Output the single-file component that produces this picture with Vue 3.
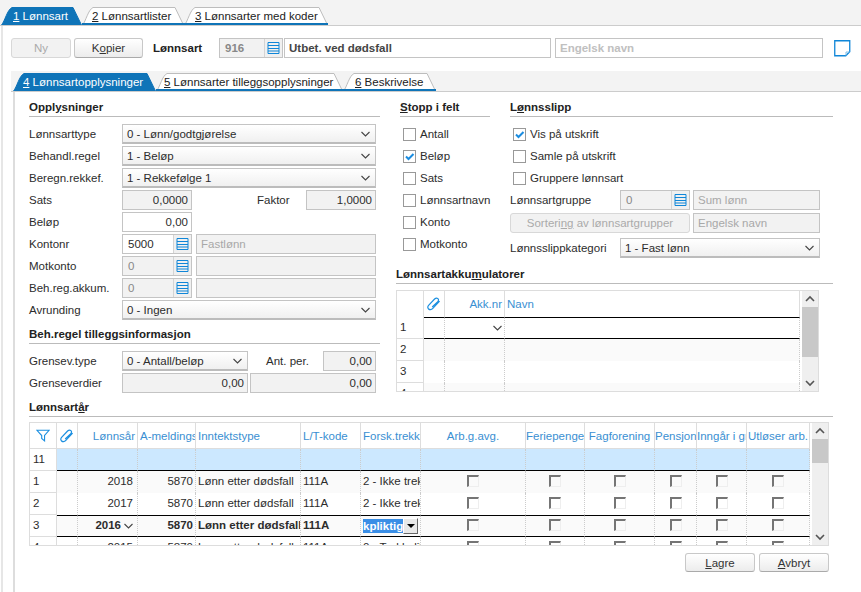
<template>
  <div class="page">
    <nav class="tabs top-tabs">
      <div
        v-for="tab in mainTabs"
        :key="tab.key"
        class="tab"
        :class="{ active: tab.active }"
        :style="{ width: tab.w + 'px' }"
      >
        <svg class="tab-shape" :width="tab.w" height="18">
          <path :d="tabPath(tab.w)" />
          <rect v-if="!tab.active" x="0" y="16" :width="tab.w" height="2" fill="#0f74b8" stroke="none" />
        </svg>
        <span class="tab-label" :style="{ paddingLeft: tab.pad + 'px' }"><u>{{ tab.key }}</u> {{ tab.label }}</span>
      </div>
    </nav>

    <div class="shell">
      <header class="toolbar">
        <button class="btn disabled ny">Ny</button>
        <button class="btn kopier">K<u>o</u>pier</button>
        <span class="toolbar-label">Lønnsart</span>
        <div class="field lookup number disabled-bg">
          <span class="lookup-value">916</span>
          <span class="lookup-btn">
            <svg width="13" height="12" viewBox="0 0 13 12"><path d="M1 .5h11v11H1zM1 3.5h11M1 6.5h11M1 9h11" class="list-icon" /></svg>
          </span>
        </div>
        <div class="field name-field">Utbet. ved dødsfall</div>
        <div class="field english-field">Engelsk navn</div>
        <svg class="note" width="17" height="17" viewBox="0 0 17 17">
          <path d="M.75.75h15v11l-4 4h-11z" fill="none" stroke="#0f86d8" stroke-width="1.3" />
          <path d="M12 15.5v-3.5h3.5" fill="none" stroke="#7fbfe9" />
        </svg>
      </header>

      <nav class="tabs sub-tabs">
        <div
          v-for="tab in subTabs"
          :key="tab.key"
          class="tab"
          :class="{ active: tab.active }"
          :style="{ width: tab.w + 'px' }"
        >
          <svg class="tab-shape" :width="tab.w" height="18">
            <path :d="tabPath(tab.w)" />
            <rect v-if="!tab.active" x="0" y="16" :width="tab.w" height="2" fill="#0f74b8" stroke="none" />
          </svg>
          <span class="tab-label" :style="{ paddingLeft: tab.pad + 'px' }"><u>{{ tab.key }}</u> {{ tab.label }}</span>
        </div>
      </nav>

      <main class="panel">
        <div class="upper">
          <section class="col-left">
            <h4 class="heading">Oppl<u>y</u>sninger</h4>
            <div class="form">
              <div class="row">
                <label>Lønnsarttype</label>
                <div class="select wide">0 - Lønn/godtgjørelse<svg class="chev" width="9" height="6" viewBox="0 0 9 6"><path d="M.5 1l4 4 4-4" /></svg></div>
              </div>
              <div class="row">
                <label>Behandl.regel</label>
                <div class="select wide">1 - Beløp<svg class="chev" width="9" height="6" viewBox="0 0 9 6"><path d="M.5 1l4 4 4-4" /></svg></div>
              </div>
              <div class="row">
                <label>Beregn.rekkef.</label>
                <div class="select wide">1 - Rekkefølge 1<svg class="chev" width="9" height="6" viewBox="0 0 9 6"><path d="M.5 1l4 4 4-4" /></svg></div>
              </div>
              <div class="row">
                <label>Sats</label>
                <div class="field num disabled-bg w70">0,0000</div>
                <span class="inline-label faktor">Faktor</span>
                <div class="field num disabled-bg w70">1,0000</div>
              </div>
              <div class="row">
                <label>Beløp</label>
                <div class="field num w70">0,00</div>
              </div>
              <div class="row" v-for="item in lookups" :key="item.label">
                <label>{{ item.label }}</label>
                <div class="field lookup w70" :class="{ 'disabled-bg': item.disabled }">
                  <span class="lookup-value">{{ item.value }}</span>
                  <span class="lookup-btn">
                    <svg width="13" height="12" viewBox="0 0 13 12"><path d="M1 .5h11v11H1zM1 3.5h11M1 6.5h11M1 9h11" class="list-icon" /></svg>
                  </span>
                </div>
                <div class="field disabled-bg muted desc">{{ item.name }}</div>
              </div>
              <div class="row">
                <label>Avrunding</label>
                <div class="select wide">0 - Ingen<svg class="chev" width="9" height="6" viewBox="0 0 9 6"><path d="M.5 1l4 4 4-4" /></svg></div>
              </div>
            </div>

            <h4 class="heading second">Beh.re<u>g</u>el tilleggsinformasjon</h4>
            <div class="form">
              <div class="row">
                <label>Grensev.type</label>
                <div class="select half">0 - Antall/beløp<svg class="chev" width="9" height="6" viewBox="0 0 9 6"><path d="M.5 1l4 4 4-4" /></svg></div>
                <span class="inline-label antper">Ant. per.</span>
                <div class="field num disabled-bg w53">0,00</div>
              </div>
              <div class="row tight">
                <label>Grenseverdier</label>
                <div class="field num disabled-bg half">0,00</div>
                <div class="field num disabled-bg half">0,00</div>
              </div>
            </div>
          </section>

          <section class="col-right">
            <div class="right-top">
              <div class="stop-col">
                <h4 class="heading"><u>S</u>topp i felt</h4>
                <div class="form">
                  <div class="check-row" v-for="c in stopFields" :key="c.label">
                    <span class="check">
                      <svg v-if="c.on" width="11" height="11" viewBox="0 0 11 11"><path d="M2 5.5l2.5 2.5 5-5" fill="none" stroke="#1a8ce0" stroke-width="2" /></svg>
                    </span>
                    {{ c.label }}
                  </div>
                </div>
              </div>
              <div class="slip-col">
                <h4 class="heading">L<u>ø</u>nnsslipp</h4>
                <div class="form">
                  <div class="check-row" v-for="c in slipFields" :key="c.label">
                    <span class="check">
                      <svg v-if="c.on" width="11" height="11" viewBox="0 0 11 11"><path d="M2 5.5l2.5 2.5 5-5" fill="none" stroke="#1a8ce0" stroke-width="2" /></svg>
                    </span>
                    {{ c.label }}
                  </div>
                  <div class="row">
                    <label class="slip-label">Lønnsartgruppe</label>
                    <div class="field lookup disabled-bg w70">
                      <span class="lookup-value">0</span>
                      <span class="lookup-btn">
                        <svg width="13" height="12" viewBox="0 0 13 12"><path d="M1 .5h11v11H1zM1 3.5h11M1 6.5h11M1 9h11" class="list-icon" /></svg>
                      </span>
                    </div>
                    <div class="field disabled-bg muted slip-desc">Sum lønn</div>
                  </div>
                  <div class="row sort-row">
                    <button class="btn disabled sort">Sorteri<u>ng</u> av lønnsartgrupper</button>
                    <div class="field disabled-bg muted slip-desc">Engelsk navn</div>
                  </div>
                  <div class="row cat-row">
                    <label class="slip-label">Lønnsslippkategori</label>
                    <div class="select cat">1 - Fast lønn<svg class="chev" width="9" height="6" viewBox="0 0 9 6"><path d="M.5 1l4 4 4-4" /></svg></div>
                  </div>
                </div>
              </div>
            </div>

            <h4 class="heading akk-heading">Lønnsartakku<u>m</u>ulatorer</h4>
            <div class="grid-frame akk-frame">
              <div class="grid-clip">
                <table class="grid akk-grid">
                  <colgroup><col style="width: 27px" /><col style="width: 21px" /><col style="width: 60px" /><col /></colgroup>
                  <thead>
                    <tr>
                      <th></th>
                      <th class="center">
                        <svg width="14" height="14" viewBox="0 0 14 14"><path :d="clipPath" class="clip" /></svg>
                      </th>
                      <th class="right">Akk.nr</th>
                      <th>Navn</th>
                    </tr>
                  </thead>
                  <tbody>
                    <tr v-for="n in 4" :key="n" :class="{ current: n === 1, odd: n % 2 === 0 }">
                      <td class="rownum">{{ n }}</td>
                      <td></td>
                      <td class="right">
                        <svg v-if="n === 1" class="chev" width="9" height="6" viewBox="0 0 9 6"><path d="M.5 1l4 4 4-4" /></svg>
                      </td>
                      <td></td>
                    </tr>
                  </tbody>
                </table>
              </div>
              <div class="scrollbar">
                <svg width="16" height="16" viewBox="0 0 16 16"><path d="M4 10l4-4 4 4" class="arrow" /></svg>
                <div class="track"><div class="thumb akk-thumb"></div></div>
                <svg width="16" height="16" viewBox="0 0 16 16"><path d="M4 6l4 4 4-4" class="arrow" /></svg>
              </div>
            </div>
          </section>
        </div>

        <h4 class="heading year-heading">Lønnsart<u>å</u>r</h4>
        <div class="grid-frame year-frame">
          <div class="grid-clip">
            <table class="grid year-grid">
              <colgroup>
                <col v-for="(w, i) in yearCols" :key="i" :style="{ width: w + 'px' }" />
              </colgroup>
              <thead>
                <tr>
                  <th class="center">
                    <svg width="14" height="13" viewBox="0 0 16 15"><path d="M1 1.5h14L9.8 7.5v6.2L6.5 11V7.5z" fill="none" stroke="#1b8fe0" stroke-width="1.3" /></svg>
                  </th>
                  <th class="center">
                    <svg width="14" height="14" viewBox="0 0 14 14"><path :d="clipPath" class="clip" /></svg>
                  </th>
                  <th class="right">Lønnsår</th>
                  <th>A-meldings</th>
                  <th>Inntektstype</th>
                  <th>L/T-kode</th>
                  <th>Forsk.trekk</th>
                  <th v-for="h in checkHeaders" :key="h" class="center">{{ h }}</th>
                </tr>
              </thead>
              <tbody>
                <tr class="new-row">
                  <td class="rownum">11</td>
                  <td v-for="i in 12" :key="i"></td>
                </tr>
                <tr
                  v-for="row in yearRows"
                  :key="row.n"
                  :class="{ current: row.current, odd: row.n % 2 === 1 }"
                >
                  <td class="rownum">{{ row.n }}</td>
                  <td></td>
                  <td class="right year-cell">
                    {{ row.year }}<svg v-if="row.current" class="chev year-chev" width="9" height="6" viewBox="0 0 9 6"><path d="M.5 1l4 4 4-4" /></svg>
                  </td>
                  <td class="right">{{ row.code }}</td>
                  <td>{{ row.type }}</td>
                  <td>{{ row.lt }}</td>
                  <td v-if="row.current" class="editing">
                    <div class="edit-wrap">
                      <span class="selected">kpliktig</span>
                      <span class="drop-btn"></span>
                    </div>
                  </td>
                  <td v-else>{{ row.trekk }}</td>
                  <td v-for="i in 6" :key="i" class="center"><span class="grid-check"></span></td>
                </tr>
              </tbody>
            </table>
          </div>
          <div class="scrollbar">
            <svg width="16" height="16" viewBox="0 0 16 16"><path d="M4 10l4-4 4 4" class="arrow" /></svg>
            <div class="track"><div class="thumb year-thumb"></div></div>
            <svg width="16" height="16" viewBox="0 0 16 16"><path d="M4 6l4 4 4-4" class="arrow" /></svg>
          </div>
        </div>

        <footer class="actions">
          <button class="btn action"><u>L</u>agre</button>
          <button class="btn action"><u>A</u>vbryt</button>
        </footer>
      </main>
    </div>
  </div>
</template>

<script setup>
const mainTabs = [
  { key: 1, label: 'Lønnsart', w: 81, pad: 12, active: true },
  { key: 2, label: 'Lønnsartlister', w: 102, pad: 10 },
  { key: 3, label: 'Lønnsarter med koder', w: 144, pad: 11 }
]

const subTabs = [
  { key: 4, label: 'Lønnsartopplysninger', w: 143, pad: 10, active: true },
  { key: 5, label: 'Lønnsarter tilleggsopplysninger', w: 187, pad: 8 },
  { key: 6, label: 'Beskrivelse', w: 93, pad: 12 }
]

const lookups = [
  { label: 'Kontonr', value: '5000', name: 'Fastlønn' },
  { label: 'Motkonto', value: '0', name: '', disabled: true },
  { label: 'Beh.reg.akkum.', value: '0', name: '', disabled: true }
]

const stopFields = [
  { label: 'Antall' },
  { label: 'Beløp', on: true },
  { label: 'Sats' },
  { label: 'Lønnsartnavn' },
  { label: 'Konto' },
  { label: 'Motkonto' }
]

const slipFields = [
  { label: 'Vis på utskrift', on: true },
  { label: 'Samle på utskrift' },
  { label: 'Gruppere lønnsart' }
]

const yearCols = [27, 21, 60, 58, 105, 60, 60, 105, 59, 70, 42, 50, 63]

const checkHeaders = ['Arb.g.avg.', 'Feriepenge', 'Fagforening', 'Pensjon', 'Inngår i gr', 'Utløser arb.']

const yearRows = [
  { n: 1, year: 2018, code: 5870, type: 'Lønn etter dødsfall', lt: '111A', trekk: '2 - Ikke trek' },
  { n: 2, year: 2017, code: 5870, type: 'Lønn etter dødsfall', lt: '111A', trekk: '2 - Ikke trek' },
  { n: 3, year: 2016, code: 5870, type: 'Lønn etter dødsfall', lt: '111A', current: true },
  { n: 4, year: 2015, code: 5870, type: 'Lønn etter dødsfall', lt: '111A', trekk: '0 - Trekkpliktig' }
]

const clipPath = 'M12.6 4.2L5.6 11.6c-1.2 1.3-3 1.4-4 .4s-.9-2.6.2-3.8L7.6 2c1-1 2.4-1.2 3.3-.4.9.8.8 2.1-.1 3L5.2 10'

const tabPath = (w) => `M0.5 18C4 14 6 3 11 0.5L${w - 9} 0.5L${w - 0.5} 18`
</script>

<style scoped>
.page {
  width: 861px;
  height: 592px;
  overflow: hidden;
  background: #fff;
  font-family: "Liberation Sans", Arial, sans-serif;
  font-size: 11.5px;
  color: #2c2c2c;
}

u {
  text-underline-offset: 1px;
}

.tabs {
  display: flex;
  background: #f3f3f3;
  border-bottom: 1px solid #ccc;
}

.top-tabs {
  padding: 7px 0 0 1px;
  box-sizing: border-box;
  height: 26px;
}

.sub-tabs {
  height: 21px;
  margin-left: 8px;
  padding: 2px 0 0 2px;
  box-sizing: border-box;
}

.tab {
  position: relative;
  height: 18px;
}

.tab-shape {
  position: absolute;
  left: 0;
  top: 0;
  fill: #fff;
  stroke: #bdbdbd;
}

.tab.active .tab-shape {
  fill: #0f74b8;
  stroke: #0f74b8;
}

.tab-label {
  position: relative;
  display: block;
  line-height: 19px;
  white-space: nowrap;
  color: #222;
}

.tab.active .tab-label {
  color: #fff;
}

.shell {
  margin-left: 1px;
  border-left: 2px solid #e6e6e6;
  height: 566px;
}

.toolbar {
  display: flex;
  align-items: center;
  height: 45px;
  padding: 12px 0 13px 8px;
  box-sizing: border-box;
}

.btn {
  height: 20px;
  padding: 0;
  font: inherit;
  color: #333;
  background: linear-gradient(#fff, #ececec);
  border: 1px solid #c8c8c8;
  border-bottom-color: #aaa;
  border-radius: 3px;
}

.btn.disabled {
  color: #aaa;
  background: #f2f2f2;
  border-color: #d8d8d8;
}

.ny {
  width: 60px;
}

.kopier {
  width: 69px;
  margin-left: 3px;
}

.toolbar-label {
  width: 66px;
  margin-left: 10px;
  font-weight: bold;
  color: #222;
}

.field {
  height: 20px;
  box-sizing: border-box;
  border: 1px solid #c4c4c4;
  padding: 0 4px;
  line-height: 19px;
  white-space: nowrap;
  overflow: hidden;
  background: #fff;
  flex-shrink: 0;
}

.disabled-bg {
  background: #f2f2f2;
}

.muted {
  color: #a8a8a8;
}

.num {
  text-align: right;
  padding-right: 3px;
}

.lookup {
  display: flex;
  padding: 0;
}

.lookup-value {
  flex: 1;
  padding-left: 5px;
  color: #2c2c2c;
}

.lookup.disabled-bg .lookup-value {
  color: #888;
}

.lookup-btn {
  width: 17px;
  display: flex;
  align-items: center;
  justify-content: center;
  background: #f0f0f0;
  border-left: 1px solid #d4d4d4;
}

.list-icon {
  fill: none;
  stroke: #0f86d8;
}

.toolbar .number {
  width: 64px;
}

.toolbar .lookup-value {
  font-weight: bold;
  color: #777;
}

.name-field {
  width: 267px;
  margin-left: 1px;
  font-weight: bold;
  color: #444;
}

.english-field {
  width: 268px;
  margin-left: 4px;
  font-weight: bold;
  color: #c0c0c0;
}

.note {
  margin-left: 11px;
}

.panel {
  margin-left: 10px;
  border-left: 2px solid #ddd;
  padding: 8px 0 0 14px;
  height: 500px;
  box-sizing: border-box;
}

.upper {
  display: flex;
}

.col-left {
  width: 351px;
}

.col-right {
  width: 437px;
  margin-left: 16px;
}

.heading {
  margin: 0 0 7px;
  height: 17px;
  line-height: 15px;
  box-sizing: border-box;
  font-size: 11.5px;
  font-weight: bold;
  color: #222;
  border-bottom: 1px solid #bbb;
}

.heading.second {
  margin-top: 7px;
}

.form {
  display: flex;
  flex-direction: column;
  gap: 2px;
}

.row {
  display: flex;
  align-items: center;
  height: 20px;
}

.row label {
  width: 93px;
  flex-shrink: 0;
}

.select {
  position: relative;
  height: 20px;
  box-sizing: border-box;
  border: 1px solid #c4c4c4;
  border-bottom: 2px solid #bcbcbc;
  padding: 0 4px;
  line-height: 19px;
  background: linear-gradient(#fff, #f0f0f0);
  flex-shrink: 0;
}

.chev {
  fill: none;
  stroke: #444;
  stroke-width: 1.1;
}

.select .chev {
  position: absolute;
  right: 5px;
  top: 6px;
}

.wide {
  width: 254px;
}

.half {
  width: 126px;
}

.tight .half + .half {
  margin-left: 2px;
}

.w70 {
  width: 70px;
}

.w53 {
  width: 53px;
}

.desc {
  width: 180px;
  margin-left: 4px;
}

.inline-label {
  flex-shrink: 0;
}

.faktor {
  width: 49px;
  margin-left: 65px;
}

.antper {
  width: 57px;
  margin-left: 18px;
}

.right-top {
  display: flex;
  height: 166px;
  margin-left: 4px;
}

.stop-col {
  width: 90px;
}

.slip-col {
  width: 323px;
  margin-left: 20px;
}

.check-row {
  display: flex;
  align-items: center;
  height: 20px;
  padding-left: 3px;
  white-space: nowrap;
}

.check {
  display: flex;
  align-items: center;
  justify-content: center;
  flex-shrink: 0;
  width: 13px;
  height: 13px;
  box-sizing: border-box;
  border: 1px solid #999;
  margin-right: 4px;
  background: #fff;
}

.slip-label {
  width: 110px !important;
}

.slip-desc {
  width: 127px;
  margin-left: 3px;
}

.sort-row {
  margin-top: 1px;
}

.cat-row {
  margin-top: 3px;
}

.sort {
  width: 180px;
}

.cat {
  width: 200px;
}

.akk-heading {
  margin: 0 0 6px;
  height: 18px;
  line-height: 17px;
}

.grid-frame {
  display: flex;
  box-sizing: border-box;
  border: 1px solid #ddd;
}

.akk-frame {
  width: 423px;
  height: 102px;
}

.year-frame {
  width: 800px;
  height: 124px;
}

.grid-clip {
  flex: 1;
  overflow: hidden;
}

.grid {
  width: 100%;
  table-layout: fixed;
  border-collapse: separate;
  border-spacing: 0;
}

.grid th {
  height: 26px;
  padding: 0 2px;
  box-sizing: border-box;
  font-weight: normal;
  text-align: left;
  color: #3a8fd2;
  white-space: nowrap;
  overflow: hidden;
  border-right: 1px solid #ddd;
  border-bottom: 1px solid #ddd;
}

.grid th.center {
  padding: 0;
}

.clip {
  fill: none;
  stroke: #1b8fe0;
  stroke-width: 1.2;
}

.grid svg {
  vertical-align: middle;
}

.grid td {
  height: 22px;
  padding: 0 2px 2px;
  box-sizing: border-box;
  white-space: nowrap;
  overflow: hidden;
  border-right: 1px dotted #ccc;
}

.grid .rownum {
  padding-left: 3px;
  background: #fff;
  border-right: 1px solid #ddd;
  border-bottom: 1px solid #ddd;
}

.grid .right {
  text-align: right;
}

.grid .center {
  text-align: center;
}

.akk-grid th {
  height: 26px;
  border-bottom: none;
}

.grid tr.odd td {
  background: #fafafa;
}

.grid tr.odd td.rownum {
  background: #fff;
}

.grid tr.current td {
  font-weight: bold;
  border-top: 1px solid #000;
  border-bottom: 1px solid #000;
}

.grid tr.current td.rownum {
  font-weight: normal;
  border-top: none;
  border-bottom: 1px solid #ddd;
}

.new-row td {
  background: #cce8ff;
  border-bottom: 1px solid #000;
}

.new-row td.rownum {
  background: #fff;
  border-bottom: 1px solid #ddd;
}

.year-chev {
  margin: 0 0 0 3px;
}

.year-cell {
  padding-right: 4px !important;
}

.grid td.editing {
  padding: 0 1px;
}

.edit-wrap {
  display: flex;
  align-items: center;
  padding-left: 1px;
}

.selected {
  width: 40px;
  background: #3a8ee6;
  color: #fff;
  line-height: 14px;
}

.drop-btn {
  position: relative;
  width: 15px;
  height: 16px;
  box-sizing: border-box;
  background: #e8e8e8;
  border: 1px solid;
  border-color: #fff #666 #666 #fff;
}

.drop-btn::after {
  content: "";
  position: absolute;
  left: 3px;
  top: 5px;
  border: 4px solid transparent;
  border-top: 4px solid #000;
  border-bottom: none;
}

.grid-check {
  display: inline-block;
  width: 12px;
  height: 12px;
  box-sizing: border-box;
  vertical-align: middle;
  border: 2px solid;
  border-color: #757575 #eee #eee #757575;
  border-right-width: 1px;
  border-bottom-width: 1px;
}

.scrollbar {
  display: flex;
  flex-direction: column;
  width: 16px;
  margin-left: 2px;
  background: #efefef;
  flex-shrink: 0;
}

.track {
  flex: 1;
}

.thumb {
  background: #c8c8c8;
}

.akk-thumb {
  height: 50px;
}

.year-thumb {
  height: 24px;
}

.arrow {
  fill: none;
  stroke: #555;
  stroke-width: 1.6;
}

.year-heading {
  width: 804px;
  margin: 7px 0 5px;
  height: 17px;
}

.actions {
  display: flex;
  justify-content: flex-end;
  gap: 4px;
  width: 800px;
  margin-top: 7px;
}

.action {
  width: 70px;
  height: 19px;
}
</style>

<style>
html,
body {
  margin: 0;
  background: #fff;
}
</style>
